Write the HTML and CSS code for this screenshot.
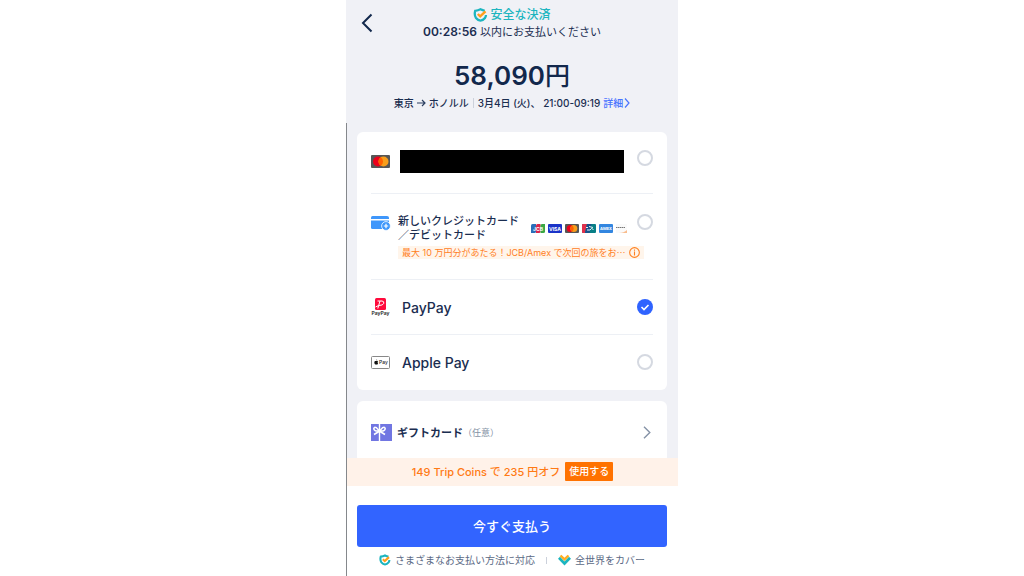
FILE: index.html
```html
<!DOCTYPE html>
<html lang="ja">
<head>
    <meta charset="UTF-8">
    <meta name="viewport" content="width=device-width, initial-scale=1.0">
    <title>お支払い</title>
    <link rel="stylesheet" href="styles.css">
</head>
<body>
    <div class="app">
        <header class="header">
            <button type="button" class="back" aria-label="戻る">
                <svg width="12" height="20" viewBox="0 0 12 20" fill="none" stroke="#12284c" stroke-width="2"><path d="M10.5 1.5 2 10l8.5 8.5"/></svg>
            </button>
            <div class="secure">
                <svg width="15" height="14" viewBox="0 0 15 14" fill="none"><path d="M11.8 2.8Q9.800 2.400 7.500 1.300 5 2.500 2.200 2.800 1 7 3 10q2 2.500 4.500 2.700Q10 12.500 12 10q.9-1.500 1-3" stroke="#1cb5bf" stroke-width="2.300"/><path d="m4.800 6 2.400 2.400 5.300-5" stroke="#ff9f1a" stroke-width="2.400"/></svg>
                <span>安全な決済</span>
            </div>
            <p class="limit"><b>00:28:56</b> 以内にお支払いください</p>
            <h1 class="price">58,090<span>円</span></h1>
            <p class="trip">
                <span>東京</span>
                <svg width="9" height="8" viewBox="0 0 9 8" fill="none" stroke="#2b3f61" stroke-width="1.2"><path d="M0 4h8M5 1l3 3-3 3"/></svg>
                <span>ホノルル</span>
                <i class="bar"></i>
                <span>3月4日 (火)、 21:00-09:19</span>
                <a href="#" class="detail">詳細<svg width="6" height="10" viewBox="0 0 6 10" fill="none" stroke="#4a74ff" stroke-width="1.2"><path d="m1 .5 4 4.500-4 4.500"/></svg></a>
            </p>
        </header>

        <div class="body">
            <main class="content">
                <div class="card methods">
                    <label class="method saved">
                        <svg class="logo" width="19" height="13" viewBox="0 0 19 13"><rect width="19" height="13" rx="1" fill="#565656"/><circle cx="7" cy="6.5" r="5" fill="#eb001b"/><circle cx="12.5" cy="6.5" r="5" fill="#f79e1b"/><path d="M9.750 2.300a5 5 0 0 1 0 8.400 5 5 0 0 1 0-8.400" fill="#ff5f00"/></svg>
                        <span class="masked"></span>
                        <input type="radio" name="method" aria-label="登録済みカード">
                    </label>

                    <label class="method new-card">
                        <svg class="logo" width="20" height="15" viewBox="0 0 20 15"><path d="M0 1.500Q0 0 1.500 0h14.500Q18 0 18 1.500V3H0z" fill="#3f97fb"/><path d="M0 4.500h18v7q0 1.500-1.500 1.500h-15Q0 13 0 11.500z" fill="#3f97fb"/><circle cx="15" cy="10" r="4.400" fill="#3f97fb" stroke="#fff" stroke-width=".8"/><path d="M12.800 10h4.400m-2.200-2.200v4.400" stroke="#fff" stroke-width="1.2"/></svg>
                        <span class="name">新しいクレジットカード<br>／デビットカード</span>
                        <span class="brands">
                            <svg width="14" height="9" viewBox="0 0 14 9"><path d="M1.500 0H5v7.500Q5 9 3.500 9H0V1.500Q0 0 1.500 0" fill="#2a6eb8"/><path d="M6.500 0H9.500v7.500Q9.500 9 8 9H5V1.500Q5 0 6.500 0" fill="#d9254a"/><path d="M11.500 0H14v7.500Q14 9 12.500 9H9.500V1.500Q9.500 0 11 0" fill="#3aa845"/><text x="7" y="6.5" text-anchor="middle" class="mark">JCB</text></svg>
                            <svg width="14" height="9" viewBox="0 0 14 9"><rect width="14" height="9" rx="1" fill="#1a34c8"/><text x="7" y="6.5" text-anchor="middle" class="mark">VISA</text></svg>
                            <svg width="14" height="9" viewBox="0 0 14 9"><rect width="14" height="9" rx="1" fill="#565656"/><circle cx="5.2" cy="4.5" r="3.5" fill="#eb001b"/><circle cx="8.8" cy="4.5" r="3.5" fill="#f79e1b"/><path d="M7 1.500a3.500 3.500 0 0 1 0 6 3.500 3.500 0 0 1 0-6" fill="#ff5f00"/></svg>
                            <svg width="14" height="9" viewBox="0 0 14 9"><rect width="14" height="9" rx="1" fill="#087f86"/><path d="M1 0h4L3 9H1Q0 9 0 8V1q0-1 1-1" fill="#e1304b"/><path d="M5 0h4.500l-2 9H3z" fill="#17528c"/><path d="M4 3.500h2M7 2.500l4 1M5 6h3l1.500-1.500 2 1" stroke="#fff" stroke-width=".9" fill="none"/></svg>
                            <svg width="14" height="9" viewBox="0 0 14 9"><rect width="14" height="9" rx="1" fill="#3286e0"/><text x="7" y="6.2" text-anchor="middle" class="mark thin">AMEX</text></svg>
                            <svg width="11" height="9" viewBox="0 0 11 9"><path d="M0 0h11v9H0z" fill="#fafafa"/><path d="M0 3.500h9" stroke="#777" stroke-width="1.2" stroke-dasharray="1.5 .5"/><path d="M3 9q5 0 8-3v3z" fill="#f9bd8e"/></svg>
                        </span>
                        <input type="radio" name="method">
                        <span class="promo">
                            <span>最大 10 万円分があたる！JCB/Amex で次回の旅をお<span class="more">…</span></span>
                            <svg width="11" height="11" viewBox="0 0 10 10" fill="none" stroke="#ff801f"><circle cx="5" cy="5" r="4.4"/><path d="M5 2.200v1.100M5 4.200v3.500"/></svg>
                        </span>
                    </label>

                    <label class="method wallet">
                        <svg class="logo" width="19" height="19" viewBox="0 0 19 19"><rect x="4" y="0" width="11" height="12" rx="1.5" fill="#ff0a3c"/><path d="M6.500 3h4.500q2.200.2 1.800 2.300Q12 7.500 8 7.500M9 3 6.800 10.500M4.500 9l3-1.500" fill="none" stroke="#fff"/><text x="9.5" y="17" text-anchor="middle" class="paypay">PayPay</text></svg>
                        <span class="name">PayPay</span>
                        <input type="radio" name="method" checked>
                    </label>

                    <label class="method wallet">
                        <svg class="logo" width="19" height="13" viewBox="0 0 19 13"><rect x=".5" y=".5" width="18" height="12" rx="1" fill="#fff" stroke="#888"/><path d="M5.200 5q1.300-.6 1.800.3-1 .9.100 1.900-.6 1.700-1.300 1.400-.6-.2-1.100 0-.8.200-1.300-1.300-.5-2.200.8-2.400zm0-.4q0-1 .9-1.300 0 1-.9 1.300" fill="#111"/><text x="8" y="8.2" class="apple-pay">Pay</text></svg>
                        <span class="name">Apple Pay</span>
                        <input type="radio" name="method">
                    </label>
                </div>

                <a href="#" class="card gift">
                    <svg width="21" height="17" viewBox="0 0 21 17"><rect width="21" height="17" fill="#7176e2"/><path d="M8.500 0v17" stroke="#fff" stroke-width="1.4"/><path d="M8.500 7Q3 7.500 2.800 4.800 3 2.500 5.500 3.800L8.500 7q5.500.5 5.700-2.200-.2-2.300-2.700-1zM8 7.500 3 10.500m6-3 5 3" fill="none" stroke="#fff" stroke-width="1.6"/></svg>
                    <span class="gift-name">ギフトカード</span>
                    <span class="optional">（任意）</span>
                    <svg class="arrow" width="8" height="13" viewBox="0 0 8 13" fill="none" stroke="#8592a6" stroke-width="1.4"><path d="m1 .8 5.800 5.700L1 12.200"/></svg>
                </a>
            </main>

            <footer class="footer">
                <div class="coins">
                    <span>149 Trip Coins で 235 円オフ</span>
                    <button type="button" class="use">使用する</button>
                </div>
                <div class="checkout">
                    <button type="button" class="pay">今すぐ支払う</button>
                    <div class="notes">
                        <svg width="12" height="12" viewBox="0 0 15 14" fill="none"><path d="M11.8 2.800Q9.800 2.400 7.500 1.300 5 2.500 2.200 2.800 1 7 3 10q2 2.500 4.500 2.700Q10 12.500 12 10q.9-1.500 1-3" stroke="#1cb5bf" stroke-width="2.600"/><path d="m4.800 6 2.400 2.400 5.300-5" stroke="#ff9f1a" stroke-width="2.600"/></svg>
                        <span>さまざまなお支払い方法に対応</span>
                        <i class="bar"></i>
                        <svg width="13" height="12" viewBox="0 0 13 12" fill="none"><path d="m1 3.800 5.500 5.700L12 3.800" stroke="#1cb5bf" stroke-width="2.8"/><path d="m2.500 1.500 4 3.800 4-3.800" stroke="#ffad1f" stroke-width="2.4"/></svg>
                        <span>全世界をカバー</span>
                    </div>
                </div>
            </footer>
        </div>
    </div>
</body>
</html>
```
FILE: styles.css
```css
* {
    box-sizing: border-box;
}

body {
    margin: 0;
    background: #fff;
    color: #1a2d50;
    font-family: Inter, "Noto Sans CJK JP", sans-serif;
    font-size: 10px;
}

h1, p {
    margin: 0;
}

button {
    border: none;
    padding: 0;
    font-family: inherit;
    cursor: pointer;
}

a {
    color: inherit;
    text-decoration: none;
}

svg {
    display: block;
    flex-shrink: 0;
}

.app {
    display: flex;
    flex-direction: column;
    max-width: 332px;
    height: 100vh;
    margin: 0 auto;
}

/* Header */
.header {
    position: relative;
    display: flex;
    flex-direction: column;
    align-items: center;
    padding: 6px 0 12px;
    background: #f0f1f6;
}

.back {
    position: absolute;
    top: 13px;
    left: 15px;
    background: none;
}

.secure {
    display: flex;
    align-items: center;
    gap: 2px;
    color: #1cb5bf;
    font-size: 12px;
    font-weight: 500;
    line-height: 17px;
}

.limit {
    font-size: 11px;
    line-height: 18px;
}

.limit b {
    font-size: 12px;
    font-weight: 600;
}

.price {
    margin-top: 16px;
    color: #12284c;
    font-size: 26px;
    font-weight: 600;
    line-height: 38px;
}

.price span {
    font-size: 25px;
    font-weight: 500;
}

.trip {
    display: flex;
    align-items: center;
    gap: 3px;
    line-height: 16px;
    font-weight: 500;
    white-space: nowrap;
}

.bar {
    width: 1px;
    height: 10px;
    margin: 0 1px;
    background: #ccd1db;
}

.detail {
    display: flex;
    align-items: center;
    gap: 1px;
    color: #4a74ff;
}

/* Body */
.body {
    display: flex;
    flex: 1;
    flex-direction: column;
    min-height: 0;
    border-left: 1px solid #85888c;
}

.content {
    flex: 1;
    min-height: 0;
    padding: 9px 11px 0 10px;
    background: #f0f1f6;
    overflow-y: auto;
    scrollbar-width: none;
}

.card {
    padding: 0 14px;
    border-radius: 6px;
    background: #fff;
}

.methods {
    padding-bottom: 1px;
}

.method {
    display: grid;
    grid-template-columns: 19px 1fr 16px;
    align-items: center;
    column-gap: 10px;
    cursor: pointer;
}

.method + .method {
    border-top: 1px solid #edf0f5;
}

.method input {
    appearance: none;
    width: 16px;
    height: 16px;
    margin: 0;
    border: 2px solid #d5d9e1;
    border-radius: 50%;
    background: #fff;
}

.method input:checked {
    border: none;
    background: #2f63ff url("data:image/svg+xml,%3Csvg xmlns='http://www.w3.org/2000/svg' viewBox='0 0 16 16'%3E%3Cpath d='m4.5 8 2.5 2.5 4.5-4.5' fill='none' stroke='white' stroke-width='1.6'/%3E%3C/svg%3E");
}

.saved {
    padding: 18px 0 20px;
}

.saved input {
    align-self: start;
}

.masked {
    height: 23px;
    margin-right: 3px;
    background: #000;
}

.new-card {
    grid-template-columns: 19px 1fr auto 16px;
    column-gap: 8px;
    row-gap: 4px;
    padding: 20px 0;
}

.new-card .name {
    font-size: 11px;
    font-weight: 500;
    line-height: 14px;
    white-space: nowrap;
}

.new-card .logo,
.new-card input {
    align-self: start;
}

.new-card .logo {
    margin-top: 2px;
}

.brands {
    display: flex;
    gap: 3px;
    margin-right: 2px;
}

.mark {
    fill: #fff;
    font-size: 5px;
    font-weight: 700;
}

.thin {
    font-size: 4px;
}

.promo {
    display: flex;
    grid-column: 2 / -1;
    align-items: center;
    justify-content: space-between;
    justify-self: start;
    gap: 3px;
    padding: 0 4px;
    background: #fff5eb;
    color: #ff801f;
    font-size: 9px;
    line-height: 13px;
    white-space: nowrap;
}

.more {
    font-family: "Noto Sans CJK JP", sans-serif;
}

.wallet {
    column-gap: 12px;
    height: 55px;
}

.wallet .name {
    font-size: 14px;
    font-weight: 500;
}

.paypay {
    fill: #222;
    font-size: 5px;
    font-weight: 600;
}

.apple-pay {
    fill: #222;
    font-size: 5px;
    font-weight: 500;
}

.gift {
    display: flex;
    align-items: center;
    height: 62px;
    margin-top: 11px;
}

.gift-name {
    margin-left: 5px;
    font-size: 11px;
    font-weight: 700;
}

.optional {
    color: #8592a6;
    font-size: 9px;
}

.arrow {
    margin: 0 2px 0 auto;
}

/* Footer */
.coins {
    display: flex;
    align-items: center;
    justify-content: center;
    gap: 5px;
    height: 28px;
    padding-bottom: 2px;
    background: #fff2e9;
    color: #ff7a14;
    font-size: 11px;
    font-weight: 500;
}

.use {
    padding: 0 4px;
    border-radius: 1px;
    background: #ff7200;
    color: #fff;
    font-size: 10px;
    font-weight: 500;
    line-height: 19px;
}

.checkout {
    padding: 19px 11px 8px 10px;
}

.pay {
    width: 100%;
    border-radius: 3px;
    background: #3264ff;
    color: #fff;
    font-size: 13px;
    font-weight: 500;
    line-height: 42px;
}

.notes {
    display: flex;
    align-items: center;
    justify-content: center;
    gap: 4px;
    margin-top: 5px;
    color: #5b6a85;
    line-height: 16px;
    white-space: nowrap;
}

.notes .bar {
    margin: 0 7px;
    height: 7px;
}
```
